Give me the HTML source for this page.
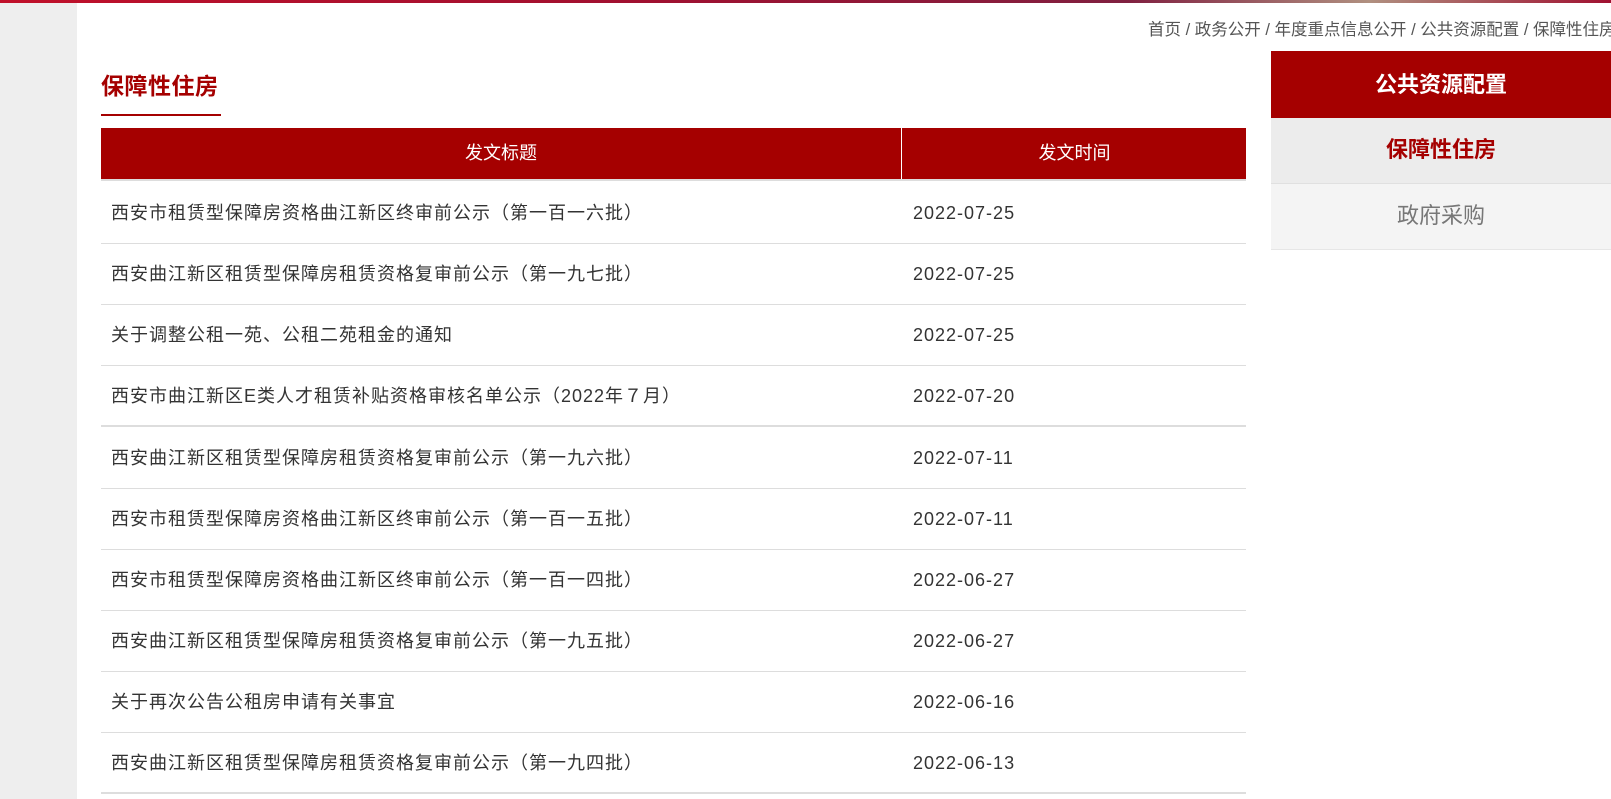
<!DOCTYPE html>
<html><head><meta charset="utf-8"><style>
*{margin:0;padding:0;box-sizing:border-box}
body{width:1611px;height:799px;overflow:hidden;background:#fff;font-family:"Liberation Sans","Noto Sans CJK SC",sans-serif;position:relative}
.top{position:absolute;left:0;top:0;width:1611px;height:3px;background:linear-gradient(90deg,#c0102a,#a01030 40%,#802040 70%,#b09080 85%,#a01030)}
.lg{position:absolute;left:0;top:3px;width:77px;height:796px;background:#eeeeee}
.bc{position:absolute;left:1148px;top:16px;font-size:16.5px;color:#555;white-space:nowrap}
.title{position:absolute;left:101px;top:67px;font-size:23px;font-weight:bold;color:#a50000;letter-spacing:0.5px}
.ul{position:absolute;left:101px;top:114px;width:120px;height:2px;background:#a50000}
.th{position:absolute;left:101px;top:128px;width:1145px;height:53px;background:#a50000;color:#fff;font-size:18px;border-bottom:2px solid #ddd}
.th div{position:absolute;top:0;height:51px;line-height:51px;text-align:center}
.th .a{left:0;width:801px;border-right:1px solid #fff}
.th .b{left:802px;width:343px}
.row{position:absolute;left:101px;width:1145px;height:61px;border-bottom:1px solid #ddd;font-size:18px;color:#333;letter-spacing:1px}
.row .t{position:absolute;left:10px;top:0;line-height:60px;white-space:nowrap}
.row .d{position:absolute;left:812px;top:0;line-height:60px}
.side{position:absolute;left:1271px;width:340px;text-align:center}
.s1{top:51px;height:67px;line-height:67px;background:#a50000;color:#fff;font-weight:bold;font-size:22px}
.s2{top:118px;height:66px;line-height:64px;background:#ececec;color:#a50000;font-weight:bold;font-size:22px;border-bottom:1px solid #e0e0e0}
.s3{top:184px;height:66px;line-height:64px;background:#f4f4f4;color:#777;font-size:22px;border-bottom:1px solid #e6e6e6}
</style></head><body>
<div class="top"></div>
<div class="lg"></div>
<div class="bc">首页 / 政务公开 / 年度重点信息公开 / 公共资源配置 / 保障性住房</div>
<div class="title">保障性住房</div>
<div class="ul"></div>
<div class="th"><div class="a">发文标题</div><div class="b">发文时间</div></div>
<div class="row" style="top:183px"><span class="t">西安市租赁型保障房资格曲江新区终审前公示（第一百一六批）</span><span class="d">2022-07-25</span></div>
<div class="row" style="top:244px"><span class="t">西安曲江新区租赁型保障房租赁资格复审前公示（第一九七批）</span><span class="d">2022-07-25</span></div>
<div class="row" style="top:305px"><span class="t">关于调整公租一苑、公租二苑租金的通知</span><span class="d">2022-07-25</span></div>
<div class="row" style="top:366px;border-bottom:2px solid #ddd"><span class="t">西安市曲江新区E类人才租赁补贴资格审核名单公示（2022年７月）</span><span class="d">2022-07-20</span></div>
<div class="row" style="top:428px"><span class="t">西安曲江新区租赁型保障房租赁资格复审前公示（第一九六批）</span><span class="d">2022-07-11</span></div>
<div class="row" style="top:489px"><span class="t">西安市租赁型保障房资格曲江新区终审前公示（第一百一五批）</span><span class="d">2022-07-11</span></div>
<div class="row" style="top:550px"><span class="t">西安市租赁型保障房资格曲江新区终审前公示（第一百一四批）</span><span class="d">2022-06-27</span></div>
<div class="row" style="top:611px"><span class="t">西安曲江新区租赁型保障房租赁资格复审前公示（第一九五批）</span><span class="d">2022-06-27</span></div>
<div class="row" style="top:672px"><span class="t">关于再次公告公租房申请有关事宜</span><span class="d">2022-06-16</span></div>
<div class="row" style="top:733px;border-bottom:2px solid #ddd"><span class="t">西安曲江新区租赁型保障房租赁资格复审前公示（第一九四批）</span><span class="d">2022-06-13</span></div>
<div class="side s1">公共资源配置</div>
<div class="side s2">保障性住房</div>
<div class="side s3">政府采购</div>
</body></html>
